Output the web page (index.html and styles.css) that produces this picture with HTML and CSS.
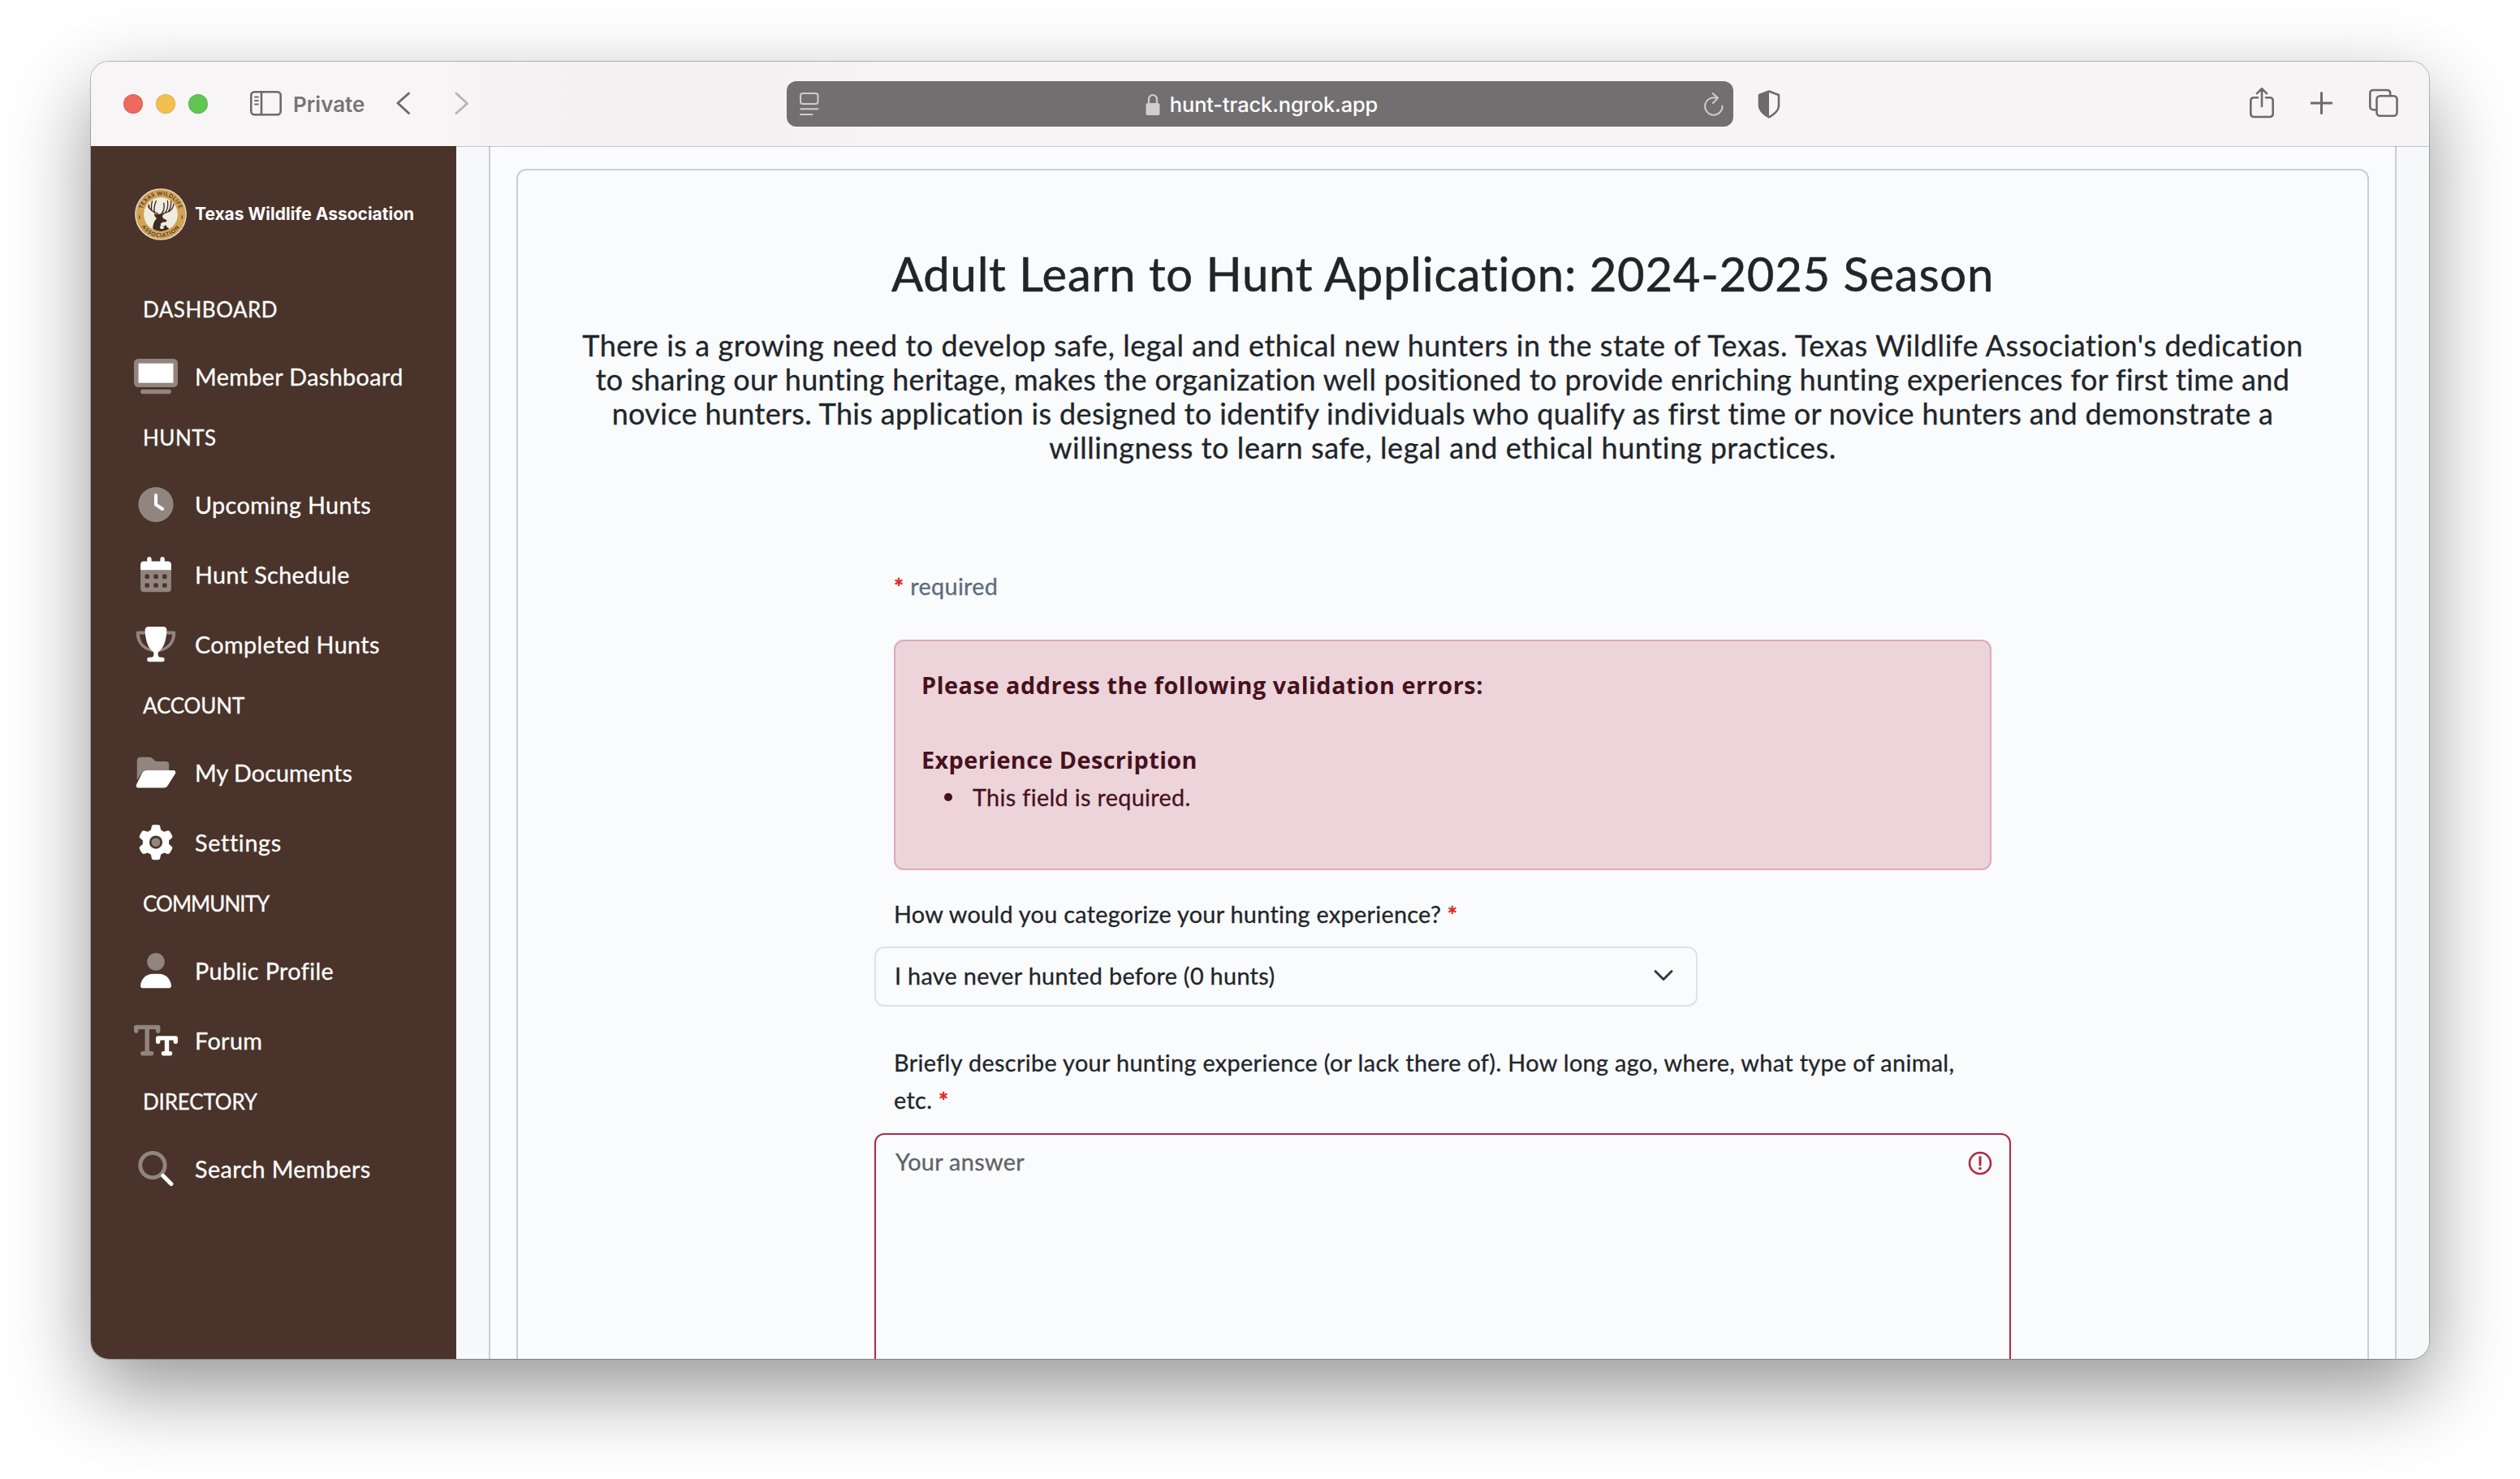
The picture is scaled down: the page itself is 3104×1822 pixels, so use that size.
FILE: index.html
```
<!DOCTYPE html>
<html lang="en">
<head>
<meta charset="utf-8">
<title>Adult Learn to Hunt Application</title>
<link rel="stylesheet" href="styles.css">
</head>
<body>
<div class="window">
  <header class="toolbar">
    <div class="lights"><span class="light red"></span><span class="light yellow"></span><span class="light green"></span></div>
    <svg class="tb-icon sidebar-icon" viewBox="0 0 40 48"><rect x="1.3" y="9.3" width="36.4" height="28" rx="4"/><path d="M14 9v28" /><path class="thin" d="M6 15.5h4M6 20h4M6 24.500h4"/></svg>
    <span class="private">Private</span>
    <svg class="tb-icon back" viewBox="0 0 18 48"><path class="bold" d="M15.500 11 2 23l13.500 12.500"/></svg>
    <svg class="tb-icon forward" viewBox="0 0 18 48"><path class="bold" d="M2 11l13.500 12.500L2 35.500"/></svg>
    <div class="url">
      <svg class="url-icon" width="24" height="56" viewBox="0 0 24 56"><rect x="1" y="15" width="21.500" height="13" rx="3"/><path d="M1 34.300h21.500M1 41h14.500"/></svg>
      <div class="address">
        <svg width="18" height="56" viewBox="0 0 18 56"><path d="M4 28v-5.500a5 5.500 0 0 1 10 0V28" fill="none" stroke="#cfcdce" stroke-width="2.200"/><rect x="0.500" y="27" width="17" height="15" rx="2.500" fill="#cfcdce"/></svg>
        <span>hunt-track.ngrok.app</span>
      </div>
      <svg class="url-icon" width="24" height="56" viewBox="0 0 24 56"><path d="M22.500 30.500A10.700 10.700 0 1 1 14.500 20.600M10.500 15l6.500 5.500-6 6.500"/></svg>
    </div>
    <svg class="shield" viewBox="0 0 28 48"><path d="M14 8.500 26 13v13.500c0 6-6 10.500-12 14-6-3.500-12-8-12-14V13z" fill="none" stroke="#6d6a6b" stroke-width="2.600" stroke-linejoin="round"/><path d="M14 8.500V40.500c-6-3.500-12-8-12-14V13z" fill="#6d6a6b"/></svg>
    <div class="actions">
      <svg class="tb-icon" width="30" height="48" viewBox="0 0 30 48"><path d="M10 16.200H5a3.700 3.700 0 0 0-3.700 3.700v16.500A3.700 3.700 0 0 0 5 40h20a3.700 3.700 0 0 0 3.700-3.600V19.900a3.700 3.700 0 0 0-3.700-3.700h-5M15 27V5.500M9 11.200l6-6 6 6"/></svg>
      <svg class="tb-icon" width="27" height="48" viewBox="0 0 27 48"><path class="bold" d="M13.500 10.500v25M1 23h25"/></svg>
      <svg class="tb-icon" width="36" height="48" viewBox="0 0 36 48"><rect x="9.500" y="14.300" width="25" height="24.500" rx="4"/><path d="M9 31.200H5a3.700 3.700 0 0 1-3.700-3.700V10.600A3.700 3.700 0 0 1 5 7h17.500a3.700 3.700 0 0 1 3.700 3.600v3.500"/></svg>
    </div>
  </header>

  <div class="page">
    <aside class="sidebar">
      <div class="brand">
        <svg class="logo" viewBox="0 0 190 190">
          <defs><path id="arcTop" d="M25.500 95a69.500 69.500 0 0 1 139 0"/><path id="arcBottom" d="M11.500 95a83.500 83.500 0 0 0 167 0"/></defs>
          <circle cx="95" cy="95" r="94.500" fill="#e9dfcd"/>
          <circle cx="95" cy="95" r="90.500" fill="#d2a354"/>
          <circle cx="95" cy="95" r="62" fill="#efece0"/>
          <text class="seal" text-anchor="middle"><textPath href="#arcTop" startOffset="50%">TEXAS WILDLIFE</textPath></text>
          <text class="seal lower" text-anchor="middle"><textPath href="#arcBottom" startOffset="50%">ASSOCIATION</textPath></text>
          <path d="M17 99v13M173 99v13" stroke="#4a332a" stroke-width="3"/>
          <g fill="none" stroke="#3f2b22" stroke-width="4" stroke-linecap="round">
            <path d="M84 92C66 88 50 76 52 60M62 80c-2-12-2-22 2-33M72 86c-2-12 0-26 6-40M54 74l-5-8"/>
            <path d="M98 92c22-2 42-12 44-34M112 88c8-10 10-26 8-42M124 83c6-10 10-22 8-36M101 88c6-8 8-20 5-34"/>
          </g>
          <path d="M70 92c8 3 14 4 20 2 6-2 10 0 18-1-2 5-6 7-8 8l4 9 12 6c2 3 0 7-4 7l-10 1-8 6c0 6 8 10 14 8l6-4 4 8 8 6c-18 12-44 12-60 0 0-16 4-28 14-38-4-3-8-10-10-18z" fill="#3f2b22"/>
          <path d="M92 146c0-8 4-12 8-16 0 8 4 10 8 14-2 5-10 6-16 2z" fill="#efece0"/>
        </svg>
        <span>Texas Wildlife Association</span>
      </div>
      <nav>
        <h6 class="open">DASHBOARD</h6>
        <a><svg class="wide" viewBox="0 0 640 512"><path class="fade" fill-rule="evenodd" d="M64 0H576a64 64 0 0 1 64 64V352a64 64 0 0 1-64 64H64a64 64 0 0 1-64-64V64A64 64 0 0 1 64 0zM64 64V352H576V64zM128 448H512a32 32 0 0 1 0 64H128a32 32 0 0 1 0-64z"/><path d="M64 64h512v288H64z"/></svg><span>Member Dashboard</span></a>
        <h6 class="open">HUNTS</h6>
        <a><svg viewBox="0 0 512 512"><circle class="fade" cx="256" cy="256" r="256"/><path d="M256 120V256L352 320" fill="none" stroke="#fff" stroke-width="48" stroke-linecap="round" stroke-linejoin="round"/></svg><span>Upcoming Hunts</span></a>
        <a><svg viewBox="0 0 512 512"><path class="fade" fill-rule="evenodd" d="M32 192H480V464a48 48 0 0 1-48 48H80a48 48 0 0 1-48-48zM112 256a16 16 0 0 0-16 16v32a16 16 0 0 0 16 16h32a16 16 0 0 0 16-16v-32a16 16 0 0 0-16-16zM240 256a16 16 0 0 0-16 16v32a16 16 0 0 0 16 16h32a16 16 0 0 0 16-16v-32a16 16 0 0 0-16-16zM368 256a16 16 0 0 0-16 16v32a16 16 0 0 0 16 16h32a16 16 0 0 0 16-16v-32a16 16 0 0 0-16-16zM112 384a16 16 0 0 0-16 16v32a16 16 0 0 0 16 16h32a16 16 0 0 0 16-16v-32a16 16 0 0 0-16-16zM240 384a16 16 0 0 0-16 16v32a16 16 0 0 0 16 16h32a16 16 0 0 0 16-16v-32a16 16 0 0 0-16-16zM368 384a16 16 0 0 0-16 16v32a16 16 0 0 0 16 16h32a16 16 0 0 0 16-16v-32a16 16 0 0 0-16-16z"/><path d="M160 0a32 32 0 0 0-32 32V64H80a48 48 0 0 0-48 48v80H480V112a48 48 0 0 0-48-48H384V32a32 32 0 0 0-64 0V64H192V32A32 32 0 0 0 160 0z"/></svg><span>Hunt Schedule</span></a>
        <a><svg class="mid" viewBox="0 0 576 512"><path class="fade" d="M132 64H24A24 24 0 0 0 0 88C0 256 110 350 252 370L240 330C120 300 55 220 49 112h86zM444 64H552a24 24 0 0 1 24 24C576 256 466 350 324 370L336 330C456 300 521 220 527 112h-86z"/><path d="M176.900 0H400c26.500 0 48.100 21.800 47.100 48.200-4.500 124-32.500 262-119.500 318-2 1.500-7.500 10-7.500 18v24c0 22 14 40 36 40h26a32 32 0 0 1 0 64H192a32 32 0 0 1 0-64h28c22 0 36-18 36-40v-24c0-8-5.500-16.500-7.500-18-87-56-115-194-119.500-318C128.800 21.800 150.400 0 176.900 0z"/></svg><span>Completed Hunts</span></a>
        <h6 class="close">ACCOUNT</h6>
        <a><svg class="mid" viewBox="0 0 576 512"><path class="fade" d="M64 32A48 48 0 0 0 12 80V370L88 250c12-20 30-26 50-26H480V144a48 48 0 0 0-48-48H310c-16 0-28-6-40-16L236 50C224 38 210 32 192 32z"/><path d="M147 224H544c25 0 40 26 28 48L461 448c-12 20-32 32-54 32H32C7 480-8 452 4 432L91 256c12-20 33-32 56-32z"/></svg><span class="flat">My Documents</span></a>
        <a><svg viewBox="0 0 512 512"><path fill-rule="evenodd" d="M495.900 166.600c3.200 8.700 .5 18.400-6.400 24.600l-43.300 39.400c1.100 8.300 1.700 16.800 1.700 25.400s-.6 17.100-1.700 25.400l43.300 39.400c6.900 6.200 9.600 15.900 6.400 24.600c-4.400 11.900-9.700 23.300-15.800 34.300l-4.700 8.100c-6.600 11-14 21.400-22.100 31.200c-5.900 7.200-15.700 9.600-24.500 6.800l-55.700-17.700c-13.400 10.300-28.200 18.900-44 25.400l-12.500 57.100c-2 9.100-9 16.300-18.200 17.800c-13.800 2.300-28 3.500-42.500 3.500s-28.700-1.200-42.500-3.500c-9.200-1.500-16.200-8.700-18.200-17.800l-12.500-57.100c-15.800-6.500-30.600-15.100-44-25.400L83.100 425.900c-8.800 2.800-18.600 .3-24.500-6.800c-8.100-9.800-15.500-20.200-22.100-31.200l-4.700-8.100c-6.100-11-11.400-22.400-15.800-34.300c-3.200-8.700-.5-18.400 6.400-24.600l43.300-39.400C64.600 273.100 64 264.600 64 256s.6-17.100 1.700-25.400L22.400 191.200c-6.900-6.200-9.600-15.900-6.400-24.600c4.400-11.900 9.700-23.300 15.800-34.300l4.700-8.100c6.600-11 14-21.400 22.100-31.200c5.900-7.200 15.700-9.600 24.500-6.800l55.700 17.700c13.400-10.300 28.200-18.900 44-25.400l12.500-57.100c2-9.100 9-16.300 18.200-17.800C227.300 1.200 241.500 0 256 0s28.700 1.200 42.500 3.500c9.200 1.500 16.200 8.700 18.200 17.800l12.500 57.100c15.800 6.500 30.600 15.100 44 25.400l55.700-17.700c8.800-2.800 18.600-.3 24.500 6.800c8.100 9.800 15.500 20.200 22.100 31.200l4.700 8.100c6.100 11 11.400 22.400 15.800 34.300zM256 352a96 96 0 1 0 0-192 96 96 0 1 0 0 192z"/><circle class="fade" cx="256" cy="256" r="64"/></svg><span class="airy">Settings</span></a>
        <h6 class="tight">COMMUNITY</h6>
        <a><svg viewBox="0 0 512 512"><circle class="fade" cx="256" cy="128" r="128"/><path d="M32 482.300C32 383.800 111.800 304 210.300 304h91.400C400.200 304 480 383.800 480 482.300c0 16.400-13.300 29.700-29.700 29.700H61.700C45.300 512 32 498.700 32 482.300z"/></svg><span>Public Profile</span></a>
        <a><svg class="wide" viewBox="0 0 640 512"><g fill="none" stroke-width="64" stroke-linecap="round" stroke-linejoin="round"><path class="fade-line" d="M32 120V64H352V120M192 64V448M128 448H256"/><path stroke="#fff" d="M352 276V224H608V276M480 224V448M432 448H528"/></g></svg><span>Forum</span></a>
        <h6 class="close">DIRECTORY</h6>
        <a><svg viewBox="0 0 512 512"><circle cx="208" cy="208" r="180" fill="none" class="fade-line" stroke-width="58"/><path d="M360 360 480 480" stroke="#fff" stroke-width="60" stroke-linecap="round"/></svg><span>Search Members</span></a>
      </nav>
    </aside>

    <main class="content">
      <div class="panel">
        <section class="card">
          <h1>Adult Learn to Hunt Application: 2024-2025 Season</h1>
          <p class="intro">
            <span class="loose">There is a growing need to develop safe, legal and ethical new hunters in the state of Texas. Texas Wildlife Association's dedication</span>
            <span>to sharing our hunting heritage, makes the organization well positioned to provide enriching hunting experiences for first time and</span>
            <span>novice hunters. This application is designed to identify individuals who qualify as first time or novice hunters and demonstrate a</span>
            <span class="loose">willingness to learn safe, legal and ethical hunting practices.</span>
          </p>
          <form class="form">
            <p class="hint"><b class="star">*</b> required</p>
            <div class="alert">
              <strong>Please address the following validation errors:</strong>
              <strong class="field">Experience Description</strong>
              <ul><li>This field is required.</li></ul>
            </div>
            <label>How would you categorize your hunting experience? <b class="star">*</b></label>
            <div class="select"><span>I have never hunted before (0 hunts)</span><svg width="26" height="18" viewBox="0 0 26 18"><path d="M3 3.500 13 13.500 23 3.500" fill="none" stroke="#343a40" stroke-width="3" stroke-linecap="round" stroke-linejoin="round"/></svg></div>
            <label class="second">Briefly describe your hunting experience (or lack there of). How long ago, where, what type of animal, <br>etc. <b class="star">*</b></label>
            <div class="answer"><span>Your answer</span><svg width="30" height="30" viewBox="0 0 30 30"><circle cx="15" cy="15" r="13" fill="none" stroke="#b02a47" stroke-width="2.600"/><path d="M15 7.500V17" stroke="#b02a47" stroke-width="3" stroke-linecap="round"/><circle cx="15" cy="21.500" r="1.800" fill="#b02a47"/></svg></div>
          </form>
        </section>
      </div>
    </main>
  </div>
</div>
</body>
</html>
```
FILE: styles.css
```
* { box-sizing: border-box; }

body {
  margin: 0;
  width: 3104px;
  height: 1822px;
  padding: 76px 112px 0;
  overflow: hidden;
  background: #fff;
  color: #212529;
  font-family: Lato, "Noto Sans", sans-serif;
  font-size: 28.8px;
  letter-spacing: 0.33px;
}

h1, h6, p, ul { margin: 0; padding: 0; }

.window {
  height: 1598px;
  border-radius: 22px;
  overflow: hidden;
  box-shadow: 0 0 0 1px rgba(0, 0, 0, 0.24), 0 38px 100px rgba(0, 0, 0, 0.42);
}

/* Browser toolbar */
.toolbar {
  position: relative;
  z-index: 1;
  display: flex;
  align-items: center;
  height: 104px;
  padding: 0 38px 0 40px;
  background: linear-gradient(90deg, #f7f5f6 400px, #f5f1f2 620px, #f5f1f2 830px, #f6f4f5 960px);
  box-shadow: 0 1px 0 rgba(0, 0, 0, 0.2);
  font-family: Inter, sans-serif;
}

.lights { display: flex; gap: 16px; }
.light { width: 24px; height: 24px; border-radius: 50%; border: 1px solid rgba(0, 0, 0, 0.1); }
.red { background: #ec6a5e; }
.yellow { background: #f5bf4f; }
.green { background: #61c554; }

.tb-icon {
  display: block;
  height: 48px;
  fill: none;
  stroke: #6d6a6b;
  stroke-width: 2.6;
  stroke-linecap: round;
  stroke-linejoin: round;
}
.tb-icon .thin { stroke-width: 1.8; }
.tb-icon .bold { stroke-width: 3; }
.sidebar-icon { width: 40px; margin-left: 52px; }
.private { width: 90px; margin-left: 13px; padding-top: 1px; color: #777475; font-size: 26px; font-weight: 600; letter-spacing: 0; }
.back { width: 18px; margin-left: 37px; }
.forward { width: 18px; margin-left: 54px; stroke: #b8b5b6; }

.url {
  display: flex;
  align-items: center;
  justify-content: space-between;
  width: 1166px;
  height: 56px;
  margin-left: 391px;
  padding: 0 12px 0 16px;
  border-radius: 12px;
  background: #726f70;
}
.url-icon { fill: none; stroke: #cfcdce; stroke-width: 2; stroke-linecap: round; stroke-linejoin: round; }
.address { display: flex; align-items: center; gap: 12px; color: #fff; font-size: 25.4px; font-weight: 500; letter-spacing: -0.1px; }
.shield { width: 28px; height: 48px; margin-left: 30px; }
.actions { display: flex; gap: 45px; margin-left: auto; }

/* Page */
.page { display: flex; height: 1494px; }

.sidebar { flex: none; width: 450px; padding-top: 52px; background: #4a332a; color: #fff; -webkit-text-stroke: 0.3px; }

.brand {
  display: flex;
  align-items: center;
  gap: 10px;
  height: 63px;
  margin: 0 0 54px 54px;
  font: 700 21px/1.2 Inter, sans-serif;
  letter-spacing: 0;
  white-space: nowrap;
  -webkit-text-stroke: 0;
}
.logo { width: 64px; height: 64px; }
.seal { font: 700 20px Lato, sans-serif; letter-spacing: 1.5px; fill: #4a332a; }
.lower { letter-spacing: 3px; }

.sidebar h6 { height: 72px; padding: 14px 0 0 64px; font-size: 26px; font-weight: 400; line-height: 36px; letter-spacing: 0; }
.sidebar h6.open { letter-spacing: 0.5px; }
.sidebar h6.close { letter-spacing: -0.17px; }
.sidebar h6.tight { letter-spacing: -0.96px; }

.sidebar a { display: flex; align-items: center; gap: 21px; height: 86px; padding-left: 53px; }
.sidebar a svg { flex: none; width: 54px; height: 43.2px; fill: #fff; }
.sidebar a span { padding-bottom: 1px; letter-spacing: 0.36px; white-space: nowrap; }
.sidebar a .flat { letter-spacing: 0.05px; }
.sidebar a .airy { letter-spacing: 0.64px; }
.fade { opacity: 0.4; }
.fade-line { stroke: #92857f; }

.content { flex: 1; padding: 0 40px; background: #f6f8fa; overflow: hidden; -webkit-text-stroke: 0.3px; }
.panel { height: 1700px; padding: 28px 32px 0; border: solid #cbced1; border-width: 0 2px; background: #f9fbfd; }
.card { height: 1700px; padding-top: 92px; border: 2px solid #cbced1; border-radius: 12px; }

h1 { font-size: 58px; font-weight: 400; line-height: 70px; letter-spacing: 0.73px; text-align: center; white-space: nowrap; -webkit-text-stroke: 0.5px; }
.intro { margin-top: 32px; font-size: 36px; line-height: 42px; text-align: center; white-space: nowrap; }
.intro span { display: block; letter-spacing: 0.35px; }
.intro .loose { letter-spacing: 0.56px; }

/* Application form */
.form { width: 1352px; margin: 126px auto 0; line-height: 46px; }
.hint { padding-top: 1px; color: #5c6b7c; }
.star { color: #e02b20; font-weight: 900; }

.alert {
  height: 284px;
  margin-top: 43px;
  padding: 31px 32px;
  border: 2px solid #dfa9b7;
  border-radius: 12px;
  background: #ecd4da;
  color: #46111d;
}
.alert strong { display: block; height: 46px; font-family: "Open Sans", sans-serif; font-weight: 700; letter-spacing: 0.56px; -webkit-text-stroke: 0; }
.alert .field { margin-top: 46px; letter-spacing: 0.42px; }
.alert ul { padding-left: 63px; list-style: none; }
.alert li { display: flex; align-items: center; }
.alert li::before {
  content: "";
  width: 10px;
  height: 10px;
  margin: 0 25px 0 -35px;
  border-radius: 50%;
  background: #46111d;
}

label { display: block; margin-top: 31px; letter-spacing: 0.3px; }
label.second { margin-top: 46px; letter-spacing: 0.355px; white-space: nowrap; }

.select {
  display: flex;
  align-items: center;
  justify-content: space-between;
  width: 1014px;
  height: 74px;
  margin: 17px 0 0 -24px;
  padding: 0 27px 2px 23px;
  border: 2px solid #dfe2e6;
  border-radius: 12px;
}

.answer {
  display: flex;
  justify-content: space-between;
  height: 600px;
  margin: 18px -24px 0;
  padding: 10px 21px 0 24px;
  border: 2px solid #b02a47;
  border-radius: 12px;
  color: #5f6265;
}
.answer svg { margin-top: 10px; }
```
